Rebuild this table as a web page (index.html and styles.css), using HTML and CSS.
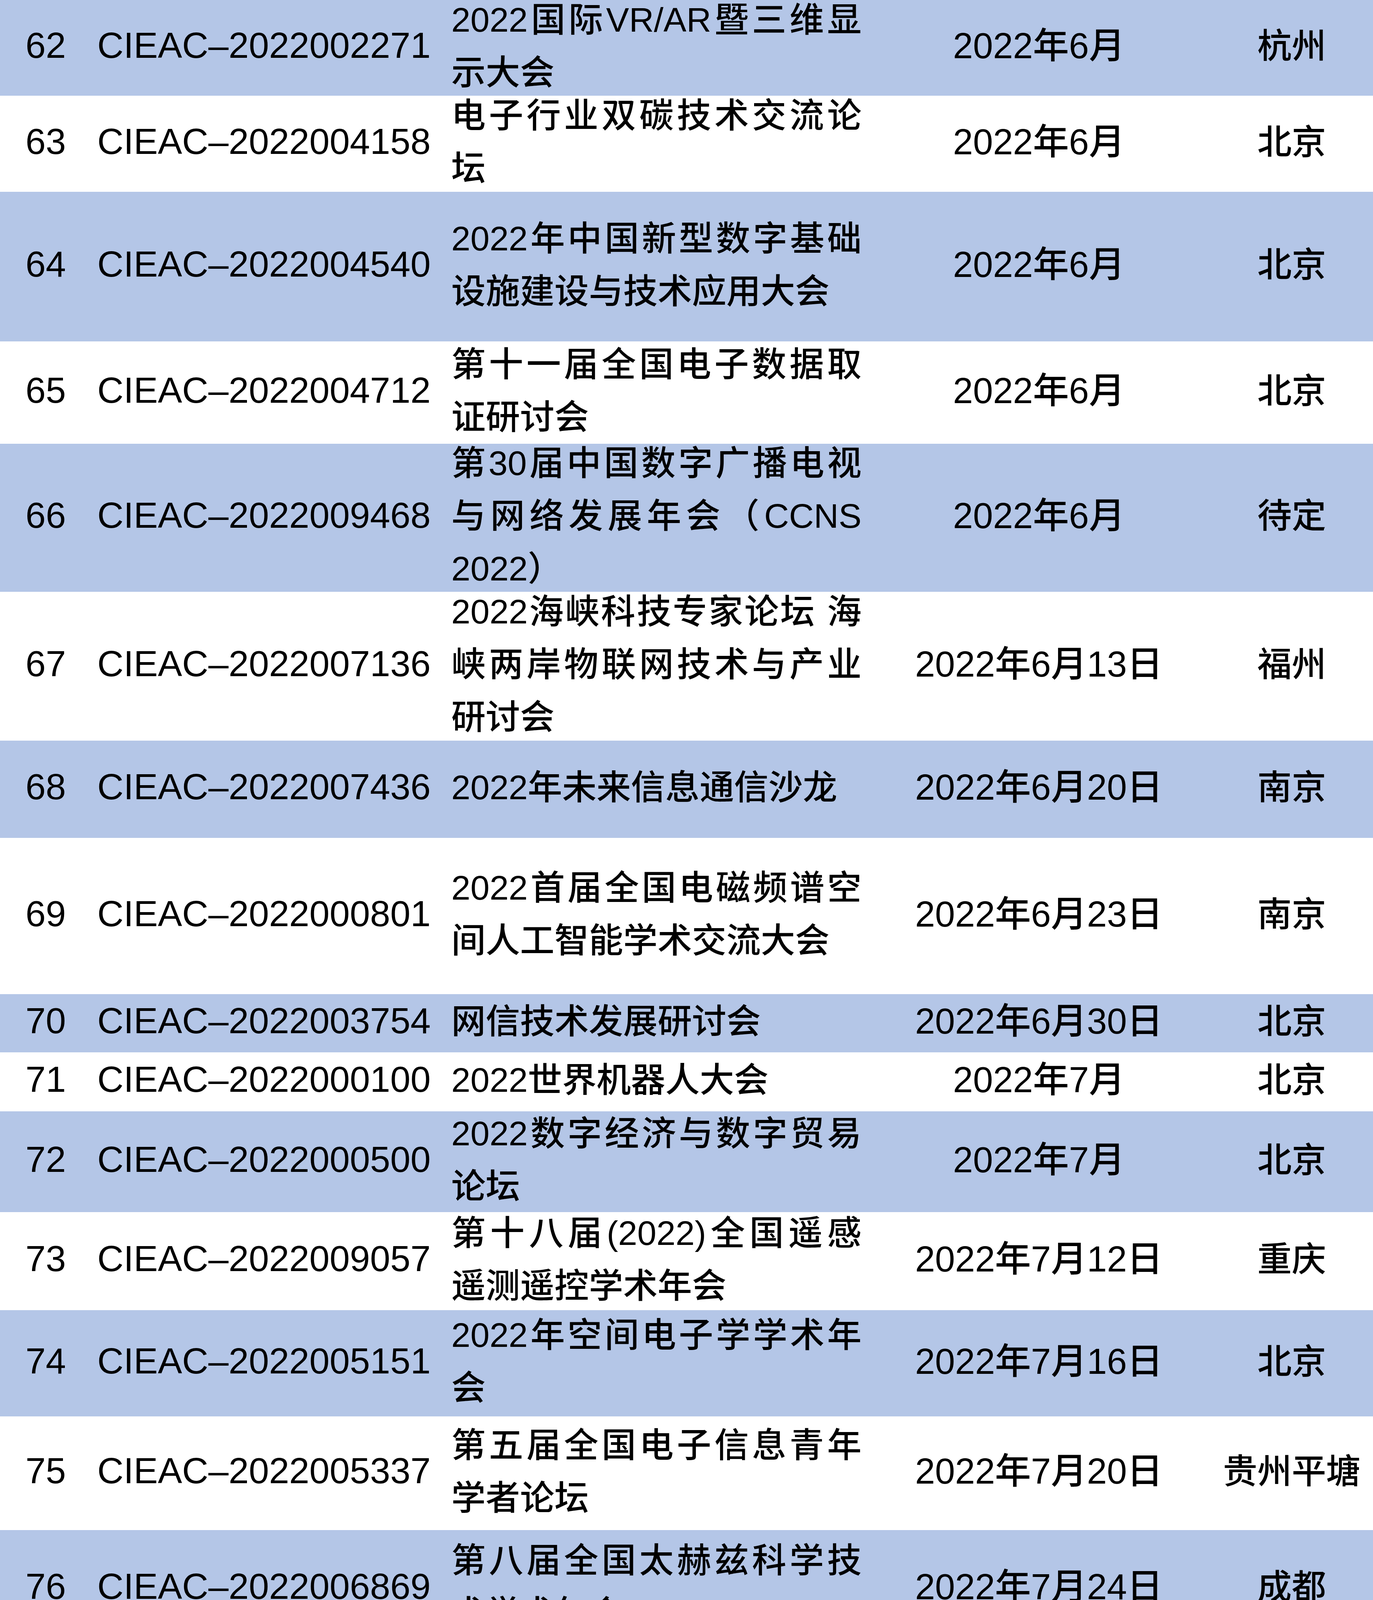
FILE: index.html
```html
<!DOCTYPE html>
<html lang="zh-CN">
<head>
<meta charset="utf-8">
<title>CIEAC 会议列表</title>
<link rel="stylesheet" href="styles.css">
</head>
<body>
<div class="table">
  <div class="row blue h245"><div class="c no">62</div><div class="c code">CIEAC–2022002271</div><div class="c name"><div class="txt"><span class="l j">2022国际VR/AR暨三维显</span><span class="l">示大会</span></div></div><div class="c date">2022年6月</div><div class="c loc">杭州</div></div>
  <div class="row h246"><div class="c no">63</div><div class="c code">CIEAC–2022004158</div><div class="c name"><div class="txt"><span class="l j">电子行业双碳技术交流论</span><span class="l">坛</span></div></div><div class="c date">2022年6月</div><div class="c loc">北京</div></div>
  <div class="row blue h383"><div class="c no">64</div><div class="c code">CIEAC–2022004540</div><div class="c name"><div class="txt"><span class="l j">2022年中国新型数字基础</span><span class="l">设施建设与技术应用大会</span></div></div><div class="c date">2022年6月</div><div class="c loc">北京</div></div>
  <div class="row h262"><div class="c no">65</div><div class="c code">CIEAC–2022004712</div><div class="c name"><div class="txt"><span class="l j">第十一届全国电子数据取</span><span class="l">证研讨会</span></div></div><div class="c date">2022年6月</div><div class="c loc">北京</div></div>
  <div class="row blue h379"><div class="c no">66</div><div class="c code">CIEAC–2022009468</div><div class="c name"><div class="txt"><span class="l j">第30届中国数字广播电视</span><span class="l j">与网络发展年会（CCNS</span><span class="l">2022）</span></div></div><div class="c date">2022年6月</div><div class="c loc">待定</div></div>
  <div class="row h381"><div class="c no">67</div><div class="c code">CIEAC–2022007136</div><div class="c name"><div class="txt"><span class="l j">2022海峡科技专家论坛 海</span><span class="l j">峡两岸物联网技术与产业</span><span class="l">研讨会</span></div></div><div class="c date">2022年6月13日</div><div class="c loc">福州</div></div>
  <div class="row blue h249"><div class="c no">68</div><div class="c code">CIEAC–2022007436</div><div class="c name"><div class="txt"><span class="l">2022年未来信息通信沙龙</span></div></div><div class="c date">2022年6月20日</div><div class="c loc">南京</div></div>
  <div class="row h400"><div class="c no">69</div><div class="c code">CIEAC–2022000801</div><div class="c name"><div class="txt"><span class="l j">2022首届全国电磁频谱空</span><span class="l">间人工智能学术交流大会</span></div></div><div class="c date">2022年6月23日</div><div class="c loc">南京</div></div>
  <div class="row blue h149"><div class="c no">70</div><div class="c code">CIEAC–2022003754</div><div class="c name"><div class="txt"><span class="l">网信技术发展研讨会</span></div></div><div class="c date">2022年6月30日</div><div class="c loc">北京</div></div>
  <div class="row h151"><div class="c no">71</div><div class="c code">CIEAC–2022000100</div><div class="c name"><div class="txt"><span class="l">2022世界机器人大会</span></div></div><div class="c date">2022年7月</div><div class="c loc">北京</div></div>
  <div class="row blue h258"><div class="c no">72</div><div class="c code">CIEAC–2022000500</div><div class="c name"><div class="txt"><span class="l j">2022数字经济与数字贸易</span><span class="l">论坛</span></div></div><div class="c date">2022年7月</div><div class="c loc">北京</div></div>
  <div class="row h251"><div class="c no">73</div><div class="c code">CIEAC–2022009057</div><div class="c name"><div class="txt"><span class="l j">第十八届(2022)全国遥感</span><span class="l">遥测遥控学术年会</span></div></div><div class="c date">2022年7月12日</div><div class="c loc">重庆</div></div>
  <div class="row blue h272"><div class="c no">74</div><div class="c code">CIEAC–2022005151</div><div class="c name"><div class="txt"><span class="l j">2022年空间电子学学术年</span><span class="l">会</span></div></div><div class="c date">2022年7月16日</div><div class="c loc">北京</div></div>
  <div class="row h291"><div class="c no">75</div><div class="c code">CIEAC–2022005337</div><div class="c name"><div class="txt"><span class="l j">第五届全国电子信息青年</span><span class="l">学者论坛</span></div></div><div class="c date">2022年7月20日</div><div class="c loc">贵州平塘</div></div>
  <div class="row blue h300"><div class="c no">76</div><div class="c code">CIEAC–2022006869</div><div class="c name"><div class="txt"><span class="l j">第八届全国太赫兹科学技</span><span class="l">术学术年会</span></div></div><div class="c date">2022年7月24日</div><div class="c loc">成都</div></div>
  <div class="row h276"><div class="c no">77</div><div class="c code">CIEAC–2022009905</div><div class="c name"><div class="txt"><span class="l j">中国国际智能产业博览会</span><span class="l">数字经济百人会</span></div></div><div class="c date">2022年8月</div><div class="c loc">重庆</div></div>
  <div class="row blue h348"><div class="c no">78</div><div class="c code">CIEAC–2022002307</div><div class="c name"><div class="txt"><span class="l j">第25届中国电子学会青年</span><span class="l j">学术年会暨2022年中国电</span><span class="l">子学会青年科学家俱乐部</span></div></div><div class="c date">2022年8月</div><div class="c loc">待定</div></div>
  <div class="row h272"><div class="c no">79</div><div class="c code">CIEAC–2022003245</div><div class="c name"><div class="txt"><span class="l j">第十七届全国电波传播年</span><span class="l">会</span></div></div><div class="c date">2022年8月</div><div class="c loc">延安</div></div>
  <div class="row blue h149"><div class="c no">80</div><div class="c code">CIEAC–2022004812</div><div class="c name"><div class="txt"><span class="l">ISC电子数据取证分论坛</span></div></div><div class="c date">2022年8月</div><div class="c loc">北京</div></div>
  <div class="row h272"><div class="c no">81</div><div class="c code">CIEAC–2022006055</div><div class="c name"><div class="txt"><span class="l j">第二届网络空间科技协同</span><span class="l">创新论坛</span></div></div><div class="c date">2022年8月</div><div class="c loc">北京</div></div>
  <div class="row blue h289"><div class="c no">82</div><div class="c code">CIEAC–2022009813</div><div class="c name"><div class="txt"><span class="l j">第十四届全国DSP应用技</span><span class="l">术学术会议</span></div></div><div class="c date">2022年8月</div><div class="c loc">待定</div></div>
</div>
</body>
</html>
```

FILE: styles.css
```css
html, body {
  margin: 0;
  padding: 0;
  background: #ffffff;
}

body {
  width: 3514px;
  font-family: "Liberation Sans", "Noto Sans CJK SC", sans-serif;
  color: #000000;
}

.table {
  display: block;
  width: 3514px;
}

.row {
  display: grid;
  grid-template-columns: 234px 906px 1080px 878px 416px;
  background: #ffffff;
}

.row.blue {
  background: #b4c6e7;
}

.h149 { height: 149px; }
.h151 { height: 151px; }
.h245 { height: 245px; }
.h246 { height: 246px; }
.h249 { height: 249px; }
.h251 { height: 251px; }
.h258 { height: 258px; }
.h262 { height: 262px; }
.h272 { height: 272px; }
.h276 { height: 276px; }
.h289 { height: 289px; }
.h291 { height: 291px; }
.h300 { height: 300px; }
.h348 { height: 348px; }
.h379 { height: 379px; }
.h381 { height: 381px; }
.h383 { height: 383px; }
.h400 { height: 400px; }

.c {
  display: flex;
  align-items: center;
  overflow: hidden;
  box-sizing: border-box;
  white-space: nowrap;
  font-size: 88px;
  line-height: 135px;
  padding-bottom: 10px;
}

.no {
  justify-content: center;
  font-size: 93px;
  padding-bottom: 12px;
}

.code {
  padding-left: 15px;
  font-size: 93px;
  padding-bottom: 12px;
}

.name {
  padding-left: 15px;
  padding-right: 15px;
  font-weight: 500;
}

.txt {
  width: 100%;
}

.l {
  display: block;
  text-align: left;
}

.l.j {
  text-align: justify;
  text-align-last: justify;
}

.date {
  justify-content: center;
  font-size: 92px;
  font-weight: 500;
}

.loc {
  justify-content: center;
  font-weight: 500;
}
```
